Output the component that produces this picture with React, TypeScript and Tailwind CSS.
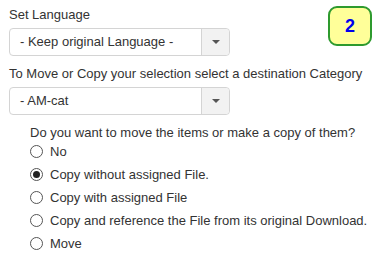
const options = [
  { label: 'No', checked: false },
  { label: 'Copy without assigned File.', checked: true },
  { label: 'Copy with assigned File', checked: false },
  { label: 'Copy and reference the File from its original Download.', checked: false },
  { label: 'Move', checked: false },
]

function Select({ value }: { value: string }) {
  return (
    <div className="flex h-[28px] w-[221px] rounded-[4px] border border-[#d4d4d4] bg-white">
      <div className="flex flex-1 items-center pl-[10px] text-[13px] text-[#333]">{value}</div>
      <div className="flex w-[28px] items-center justify-center rounded-r-[4px] border-l border-[#d4d4d4] bg-[#f2f2f2]">
        <svg width="8" height="4" viewBox="0 0 8 4">
          <path d="M0 0 L8 0 L4 4 Z" fill="#555" />
        </svg>
      </div>
    </div>
  )
}

function Radio({ checked }: { checked: boolean }) {
  return (
    <span className="flex h-[13px] w-[13px] shrink-0 items-center justify-center rounded-full border border-[#555] bg-white">
      {checked && <span className="h-[7px] w-[7px] rounded-full bg-[#222]" />}
    </span>
  )
}

export default function App() {
  return (
    <div className="relative h-[258px] w-[377px] bg-white font-['Liberation_Sans',Arial,sans-serif] text-[13px] text-[#333]">
      <div className="absolute right-[5px] top-[6px] flex h-[40px] w-[44px] items-center justify-center rounded-[9px] border-2 border-[#2e9a2e] bg-[#ffff99] text-[18px] font-bold text-[#0000ee]">
        2
      </div>

      <div className="flex flex-col px-[9px] pt-[7px]">
        <div className="leading-[15px]">Set Language</div>
        <div className="mt-[6px]">
          <Select value="- Keep original Language -" />
        </div>

        <div className="mt-[10px] leading-[15px]">To Move or Copy your selection select a destination Category</div>
        <div className="mt-[6px]">
          <Select value="- AM-cat" />
        </div>

        <div className="mt-[10px] pl-[21px]">
          <div className="leading-[15px]">Do you want to move the items or make a copy of them?</div>
          <div className="mt-[4px] flex flex-col gap-[8px]">
            {options.map((o) => (
              <label key={o.label} className="flex items-center gap-[7px] leading-[15px]">
                <Radio checked={o.checked} />
                <span>{o.label}</span>
              </label>
            ))}
          </div>
        </div>
      </div>
    </div>
  )
}
